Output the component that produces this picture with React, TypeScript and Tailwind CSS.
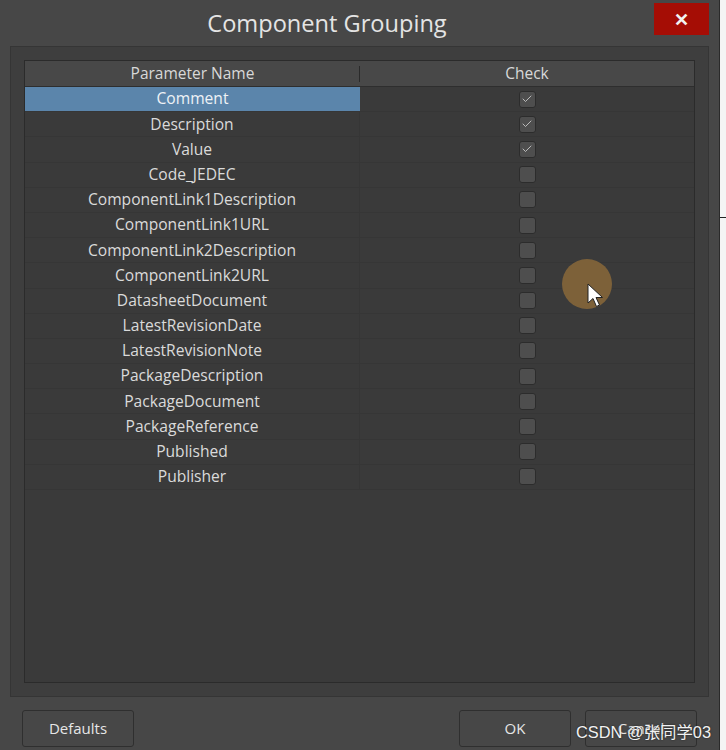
import { Check } from "lucide-react";

const rows: { name: string; checked: boolean }[] = [
  { name: "Comment", checked: true },
  { name: "Description", checked: true },
  { name: "Value", checked: true },
  { name: "Code_JEDEC", checked: false },
  { name: "ComponentLink1Description", checked: false },
  { name: "ComponentLink1URL", checked: false },
  { name: "ComponentLink2Description", checked: false },
  { name: "ComponentLink2URL", checked: false },
  { name: "DatasheetDocument", checked: false },
  { name: "LatestRevisionDate", checked: false },
  { name: "LatestRevisionNote", checked: false },
  { name: "PackageDescription", checked: false },
  { name: "PackageDocument", checked: false },
  { name: "PackageReference", checked: false },
  { name: "Published", checked: false },
  { name: "Publisher", checked: false },
];

const CheckBox = ({ checked }: { checked: boolean }) => (
  <span className="flex h-[17px] w-[17px] items-center justify-center rounded-[3px] border border-[#2c2c2c] bg-[#4e4e4e]">
    {checked && <Check size={12} strokeWidth={1.6} className="text-[#d6d6d6]" />}
  </span>
);

const DialogButton = ({ label }: { label: string }) => (
  <button className="flex h-[37px] w-[112px] items-center justify-center rounded-[3px] border border-[#2f2f2f] bg-[#474747] text-[15px] text-[#e6e6e6]">
    {label}
  </button>
);

export default function App() {
  return (
    <div
      className="relative h-[750px] w-[726px] overflow-hidden bg-[#f4f4f4]"
      style={{ fontFamily: '"Open Sans", "Noto Sans", sans-serif' }}
    >
      {/* bits of the window behind the dialog */}
      <div className="absolute left-[720px] top-[217px] h-px w-[6px] bg-[#222]" />

      <div className="flex h-[750px] w-[720px] flex-col border-r border-[#2a2a2a] bg-[#474747]">
        {/* title bar */}
        <div className="flex h-[46px] shrink-0">
          <div className="flex flex-1 items-center justify-center pt-[2px] text-[23.6px] text-[#e4e4e4]">
            Component Grouping
          </div>
          <div className="pt-[3px] pr-[10px]">
            <div className="flex h-[32px] w-[55px] items-center justify-center bg-[#a50d05] text-[18px] font-bold text-[#f2f2f2]">
              ✕
            </div>
          </div>
        </div>

        {/* inner panel */}
        <div className="mx-[10px] flex h-[651px] flex-col border border-[#353535] bg-[#3e3e3e] p-[13px]">
          <div className="flex flex-1 flex-col border border-[#2b2b2b] bg-[#3a3a3a]">
            {/* header */}
            <div className="flex h-[26px] shrink-0 border-b border-[#2e2e2e] bg-[#484848] text-[15.5px] text-[#d8d8d8]">
              <div className="relative flex w-[335px] items-center justify-center">
                Parameter Name
                <span className="absolute right-0 top-[5px] h-[16px] w-px bg-[#2a2a2a]" />
              </div>
              <div className="flex flex-1 items-center justify-center">Check</div>
            </div>

            {rows.map((r, i) => (
              <div
                key={r.name}
                className="flex h-[25.2px] shrink-0 border-b border-[#363636] text-[15.6px] text-[#dadada]"
              >
                <div
                  className={
                    i === 0
                      ? "flex w-[335px] items-center justify-center bg-[#5b85ab] text-[#eef2f6]"
                      : "flex w-[335px] items-center justify-center border-r border-[#363636]"
                  }
                >
                  {r.name}
                </div>
                <div className="flex flex-1 items-center justify-center">
                  <CheckBox checked={r.checked} />
                </div>
              </div>
            ))}
          </div>
        </div>

        {/* buttons */}
        <div className="flex items-start justify-between pl-[22px] pr-[22px] pt-[13px]">
          <DialogButton label="Defaults" />
          <div className="flex gap-[14px]">
            <DialogButton label="OK" />
            <DialogButton label="Cancel" />
          </div>
        </div>
      </div>

      {/* cursor highlight */}
      <div className="absolute left-[562px] top-[259px] h-[50px] w-[50px] rounded-full bg-[#85663a]/90" />
      <svg className="absolute left-[587px] top-[283px]" width="18" height="26" viewBox="0 0 18 26">
        <path d="M1 1 L1 20 L6 15.5 L9.5 23.5 L12.5 22 L9 14.5 L15.5 14.5 Z" fill="#ffffff" stroke="#222" strokeWidth="1" />
      </svg>

      {/* watermark */}
      <div
        className="absolute left-[576px] top-[720px] text-[16.4px] text-[#f2f2f2]"
        style={{ textShadow: "0 0 2px rgba(0,0,0,0.6)", fontFamily: '"Liberation Sans", "Noto Sans CJK SC", sans-serif' }}
      >
        CSDN @张同学03
      </div>
    </div>
  );
}
